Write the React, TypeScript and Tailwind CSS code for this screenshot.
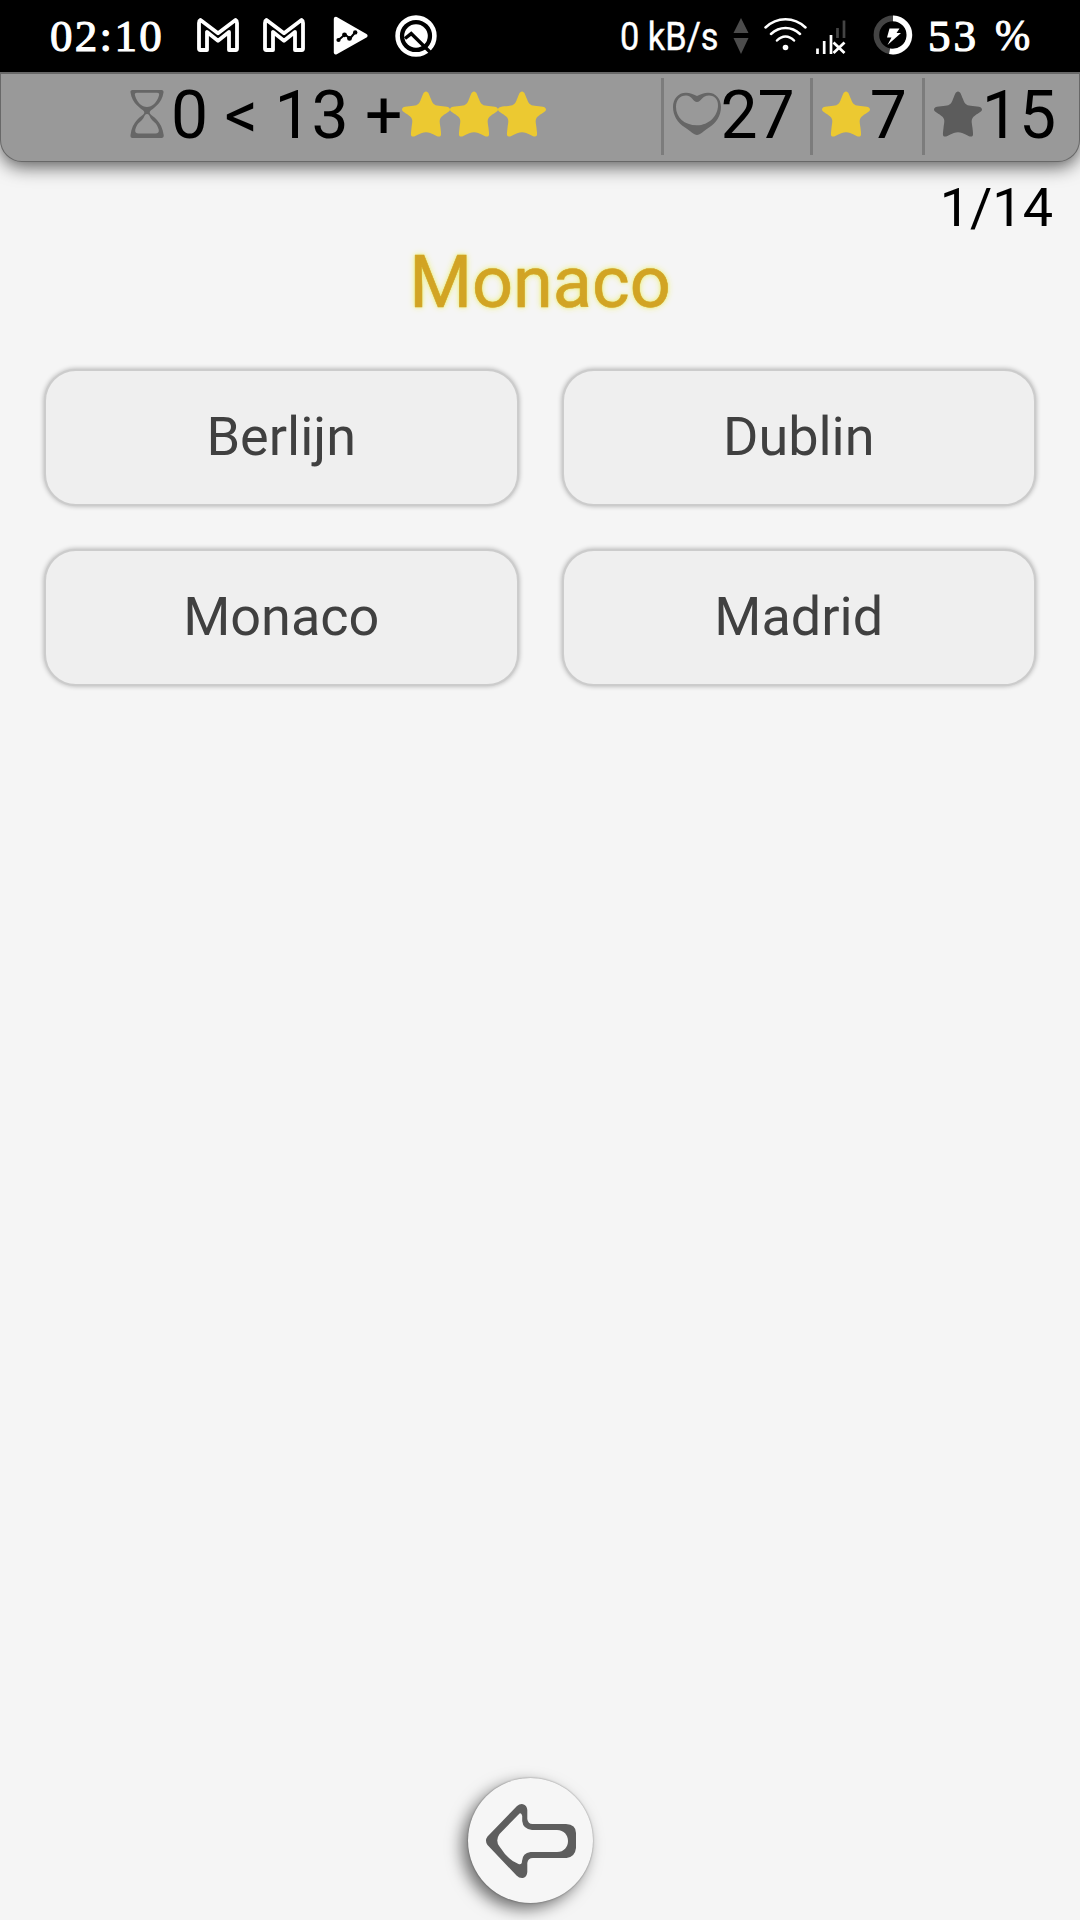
import type { ReactNode } from "react";

function Star({ className }: { className: string }) {
  return (
    <svg viewBox="0 0 48 48" className={`size-12 shrink-0 ${className}`} fill="currentColor">
      <path d="M24 .4C21.5 .4 20.7 4 19 8C17.5 12 17 13.4 13 14.6C9 15.6 0 14.8 0 18.5C0 21 5 22.5 8.5 25.8C11.5 29 10 32 9.5 37C9 42 8 45.6 11 45.6C14 45.6 18 41.2 24 41.2C30 41.2 34 45.6 37 45.6C40 45.6 39 42 38.5 37C38 32 36.5 29 39.5 25.8C43 22.5 48 21 48 18.5C48 14.8 39 15.6 35 14.6C31 13.4 30.5 12 29 8C27.3 4 26.5 .4 24 .4Z" />
    </svg>
  );
}

function Heart() {
  return (
    <svg viewBox="0 0 48 48" className="size-12 shrink-0 text-[#666]" fill="currentColor" fillRule="evenodd">
      <path d="M24 5C20 3 17 1.7 13 1.7C5 1.7 0 8 0 16C0 25 5 32 12 36.5C17 39.5 21 44 24 44C27 44 31 39.5 36 36.5C43 32 48 25 48 16C48 8 43 1.7 35 1.7C31 1.7 28 3 24 5ZM24 11C28 11 29 4.6 36 4.6C42 4.6 45.3 9 45 15C44.5 25 36 34.3 24 34.3C11 34.3 3 26 3 16C3 9 7 4.6 13 4.6C19 4.6 20 11 24 11Z" />
    </svg>
  );
}

function Hourglass() {
  return (
    <svg viewBox="0 0 48 48" className="size-12 shrink-0 overflow-visible text-[#666]" fill="currentColor" fillRule="evenodd">
      <path d="M9.5 -1H38.5C40 -1 40.8 0 40.5 1.5C39 13 29 18 27.3 20C26.5 21 26.5 22 27.3 23C29 25 39 30 40.7 44C41 46 40 47 38.5 47H9.5C8 47 7.2 46 7.5 44C9 30 19 25 20.7 23C21.5 22 21.5 21 20.7 20C19 18 9 13 7.5 1.5C7.2 0 8 -1 9.5 -1ZM14 1.8C12 1.8 11.5 3 12 4.5C14 11.5 19 16 24 16C29 16 34 11.5 36 4.5C36.5 3 36 1.8 34 1.8ZM24 23C22 23 21.5 25 20.5 27C18 31 14.5 31 12.3 38.5C11.7 41 13 42.4 15.5 42.4H32.5C35 42.4 36.3 41 35.7 38.5C33.5 31 30 31 27.5 27C26.5 25 26 23 24 23Z" />
    </svg>
  );
}

function MailIcon() {
  return (
    <svg viewBox="0 0 42 34" className="h-[34px] w-[42px] shrink-0" fill="none" stroke="white" strokeWidth="3.8" strokeLinejoin="round">
      <path d="M3.5 2L21 15.3L38.5 2Q40 2.8 40 5V30.5Q40 32 38.8 32H32V14L21 22.8L10 14V32H3.3Q2 32 2 30.5V5Q2 2.8 3.5 2Z" />
    </svg>
  );
}

function PlayTrendIcon() {
  return (
    <svg viewBox="0 0 35 40" className="h-10 w-[35px] shrink-0">
      <path d="M2.8 2.8L32.5 19.8L2.8 36.5Z" fill="white" stroke="white" strokeWidth="4" strokeLinejoin="round" />
      <path d="M5.5 24L12 18.5L17 22.5L22.5 16" fill="none" stroke="black" strokeWidth="2" />
      <g fill="black">
        <circle cx="5.5" cy="24" r="2.1" />
        <circle cx="11.5" cy="18.8" r="2.4" />
        <circle cx="16.5" cy="22.4" r="2.4" />
        <circle cx="22.2" cy="16.4" r="2.2" />
      </g>
    </svg>
  );
}

function QIcon() {
  return (
    <svg viewBox="0 0 42 42" className="size-[42px] shrink-0" fill="none">
      <circle cx="21" cy="21" r="18.4" stroke="white" strokeWidth="4.6" />
      <circle cx="21" cy="21" r="11.8" fill="white" />
      <path d="M10 23.5L16.2 18.6L38 40" stroke="black" strokeWidth="3.4" />
    </svg>
  );
}

function WifiIcon() {
  return (
    <svg viewBox="0 0 43 33" className="h-[33px] w-[43px] shrink-0" fill="none" stroke="white" strokeWidth="2.5" strokeLinecap="round">
      <path d="M1.5 9.5C13 -1.5 30 -1.5 41.5 9.5M7 16C15.5 8 27.5 8 36 16M13 22.5C18 17 25 17 30 22.5" />
      <circle cx="21.5" cy="29.5" r="2.8" fill="white" stroke="none" />
    </svg>
  );
}

function SignalIcon() {
  return (
    <svg viewBox="0 0 30 35" className="h-[35px] w-[30px] shrink-0" fill="none" stroke="white" strokeWidth="2.7">
      <path d="M1.5 28.5V34M8.2 21V34M15 15V34" />
      <path d="M21.5 8V18M28 .5V18" stroke="#444" />
      <path d="M17.5 22.5L28.5 33M28.5 22.5L17.5 33" strokeWidth="2.8" />
    </svg>
  );
}

function BatteryIcon() {
  return (
    <svg viewBox="0 0 40 40" className="size-10 shrink-0" fill="none">
      <circle cx="20" cy="20" r="16.6" stroke="#444" strokeWidth="5.6" />
      <path d="M20 3.4A16.6 16.6 0 1 1 16.6 36.3" stroke="white" strokeWidth="5.6" />
      <path d="M16.5 13.5H26.5L23.5 18H28L14.5 30L18.5 22.5H14Z" fill="white" />
    </svg>
  );
}

function StatusBar() {
  return (
    <div className="flex h-[72px] items-start bg-black text-white">
      <span className="ml-[50px] mt-[12px] w-[147px] font-['Liberation_Serif',serif] text-[45px] leading-[48px] tracking-[2.3px] [-webkit-text-stroke:1.1px_white]">
        02:10
      </span>
      <div className="mt-[18px] flex">
        <MailIcon />
        <span className="w-6" />
        <MailIcon />
      </div>
      <div className="ml-[28px] mt-[16px]"><PlayTrendIcon /></div>
      <div className="ml-[27px] mt-[15px]"><QIcon /></div>
      <div className="ml-[183px] mt-[13px] w-[114px]">
        <span className="inline-block origin-left scale-x-[0.87] text-[39.5px] leading-[48px] whitespace-nowrap [-webkit-text-stroke:0.4px_white]">0 kB/s</span>
      </div>
      <svg viewBox="0 0 16 36" className="-ml-px mt-[18px] h-9 w-4 shrink-0 fill-[#4c4c4c]">
        <path d="M8 0L15.5 15H.5ZM.5 20H15.5L8 36Z" />
      </svg>
      <div className="ml-[15px] mt-[18px]"><WifiIcon /></div>
      <div className="ml-[9px] mt-[20px]"><SignalIcon /></div>
      <div className="ml-[27px] mt-[15px]"><BatteryIcon /></div>
      <span className="ml-[15px] mt-[12px] font-['Liberation_Serif',serif] text-[45px] leading-[48px] tracking-[3px] whitespace-nowrap [-webkit-text-stroke:1.2px_white]">
        53
      </span>
      <span className="ml-[16px] mt-[12px] inline-block origin-left scale-x-[0.96] font-['Liberation_Serif',serif] text-[44px] leading-[48px] [-webkit-text-stroke:1px_white]">
        %
      </span>
    </div>
  );
}

function Counter({ icon, value }: { icon: ReactNode; value: string }) {
  return (
    <div className="flex h-[77px] shrink-0 items-center border-l-3 border-[#7c7c7c] pl-[9px] pr-[15px]">
      <div className="-mt-[3px]">{icon}</div>
      <span className="-mt-[2px] leading-[75px]">{value}</span>
    </div>
  );
}

function ScoreBar() {
  return (
    <header className="relative flex h-[90px] items-start rounded-b-[22px] border border-t-2 border-[#686868] bg-[#999] pr-[8px] pt-[4px] text-[66px] text-black shadow-[0_5px_18px_rgba(0,0,0,0.62)]">
      <div className="flex h-[77px] flex-1 items-center pl-[122px] whitespace-pre">
        <div className="-mt-[3px]"><Hourglass /></div>
        <span className="-mt-[2px] leading-[75px]">0 &lt; 13 +</span>
        <div className="-mt-[3px] flex">
          <Star className="text-[#ecc931]" />
          <Star className="text-[#ecc931]" />
          <Star className="text-[#ecc931]" />
        </div>
      </div>
      <Counter icon={<Heart />} value="27" />
      <Counter icon={<Star className="text-[#ecc931]" />} value="7" />
      <Counter icon={<Star className="text-[#5c5c5c]" />} value="15" />
    </header>
  );
}

const answers = ["Berlijn", "Dublin", "Monaco", "Madrid"];

export default function App() {
  return (
    <div className="flex h-[1920px] w-[1080px] flex-col overflow-hidden bg-[#f5f5f5] font-[Roboto,sans-serif]">
      <StatusBar />
      <div className="flex flex-1 flex-col">
        <ScoreBar />
        <p className="mt-[14px] pr-[27px] text-right text-[54px] leading-[63px] text-black">1/14</p>
        <h1 className="mt-[2px] text-center text-[72px] leading-[84px] font-normal text-[#d2a424] [-webkit-text-stroke:0.6px_#d2a424] [text-shadow:0_0_3px_#e8ec70,0_0_7px_#eef080]">
          Monaco
        </h1>
        <main className="mt-[44px] grid grid-cols-2 gap-x-[43px] gap-y-[43px] px-[44px]">
          {answers.map((answer) => (
            <button
              key={answer}
              className="h-[137px] rounded-[32px] border-2 border-[#cccccc] bg-[#efefef] pb-[2px] text-[54px] leading-[64px] text-[#404040] shadow-[0_0_5px_rgba(0,0,0,0.3)]"
            >
              {answer}
            </button>
          ))}
        </main>
        <footer className="mt-auto mb-[17px] pl-[468px]">
          <button className="block size-[125px] rounded-full bg-[#f6f6f6] shadow-[-6px_6px_16px_rgba(0,0,0,0.55),0_0_2px_rgba(0,0,0,0.4)]">
            <svg viewBox="0 0 125 125" className="size-[125px]" fill="#5e5e5e" fillRule="evenodd">
              <path d="M19.5 58.5L49 28Q52 25.5 55 26.2Q59 27.5 59.3 32V41Q60 46 64.5 46H98Q108 46.5 108 55V70Q107 79 98.5 80H65Q60 80 59.3 85V94Q59 99 55 100Q51.5 100.5 48.5 97.5L19.5 67Q16.5 62.5 19.5 58.5ZM51.5 35.5L31.5 56Q27 62.5 31.5 68.5Q40 82 50.5 86Q54 87 54 83Q54.5 75 62.5 74H89C96 74 100 69 100 63C100 57 96 52 89 52H64Q55 51 54.2 43V38Q53.5 34.5 51.5 35.5Z" />
            </svg>
          </button>
        </footer>
      </div>
    </div>
  );
}
